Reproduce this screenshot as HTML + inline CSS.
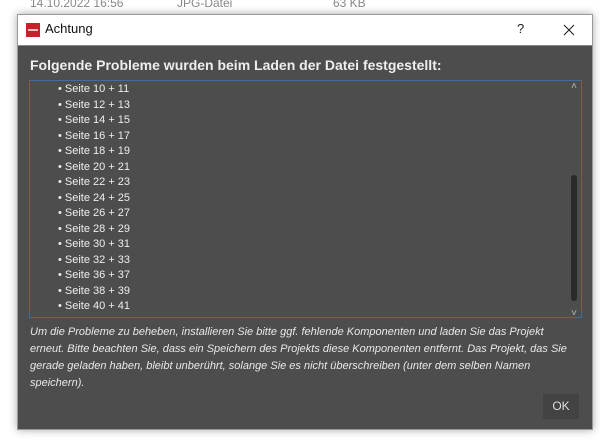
<!DOCTYPE html><html><head><style>
body{margin:0;width:600px;height:448px;background:#fff;position:relative;overflow:hidden;font-family:"Liberation Sans",sans-serif}
.a{position:absolute}
</style></head><body>
<div class="a" style="left:30px;top:-4px;color:#888;font-size:12px;">14.10.2022 16:56</div>
<div class="a" style="left:177px;top:-4px;color:#888;font-size:12px;">JPG-Datei</div>
<div class="a" style="left:333px;top:-4px;color:#888;font-size:12px;">63 KB</div>
<div class="a" style="left:17px;top:14px;width:576px;height:416px;background:#4d4d4d;box-shadow:0 0 8px rgba(0,0,0,.35);border:1px solid #999;box-sizing:border-box">
 <div class="a" style="left:0;top:0;right:0;height:30px;background:#fff;border-bottom:1px solid #888"></div>
 <div class="a" style="left:8px;top:8px;width:14px;height:14px;background:#c8202a"><div style="position:absolute;left:2px;top:6px;width:10px;height:2px;background:#f6c0c0"></div></div>
 <div class="a" style="left:27px;top:6px;font-size:13px;color:#111">Achtung</div>
 <div class="a" style="left:499px;top:6px;font-size:13px;color:#222">?</div>
 <svg class="a" style="left:545px;top:9px" width="12" height="12"><path d="M1 1L11 11M11 1L1 11" stroke="#222" stroke-width="1.1"/></svg>
 <div class="a" style="left:12px;top:42px;font-size:14px;font-weight:bold;color:#eee">Folgende Probleme wurden beim Laden der Datei festgestellt:</div>
 <div class="a" style="left:11px;top:65px;width:553px;height:238px;border:1px solid #3a6f9e;box-sizing:border-box;overflow:hidden">
  <div style="position:absolute;left:28px;top:1px;font-size:11px;line-height:15.5px;color:#eee">
  • Seite 10 + 11<br>• Seite 12 + 13<br>• Seite 14 + 15<br>• Seite 16 + 17<br>• Seite 18 + 19<br>• Seite 20 + 21<br>• Seite 22 + 23<br>• Seite 24 + 25<br>• Seite 26 + 27<br>• Seite 28 + 29<br>• Seite 30 + 31<br>• Seite 32 + 33<br>• Seite 36 + 37<br>• Seite 38 + 39<br>• Seite 40 + 41</div>
  <div class="a" style="right:4px;top:94px;width:6px;height:126px;background:#2a2a2a;border-radius:3px"></div>
  <div class="a" style="right:4px;top:0px;font-size:10px;color:#bbb">˄</div>
  <div class="a" style="right:4px;bottom:-2px;font-size:10px;color:#bbb">˅</div>
 </div>
 <div class="a" style="left:12px;top:309px;width:548px;font-size:11px;line-height:17px;color:#e8e8e8;font-style:italic">Um die Probleme zu beheben, installieren Sie bitte ggf. fehlende Komponenten und laden Sie das Projekt erneut. Bitte beachten Sie, dass ein Speichern des Projekts diese Komponenten entfernt. Das Projekt, das Sie gerade geladen haben, bleibt unberührt, solange Sie es nicht überschreiben (unter dem selben Namen speichern).</div>
 <div class="a" style="left:525px;top:379px;width:36px;height:25px;background:#434343;color:#ddd;font-size:12px;text-align:center;line-height:25px">OK</div>
</div>
</body></html>
